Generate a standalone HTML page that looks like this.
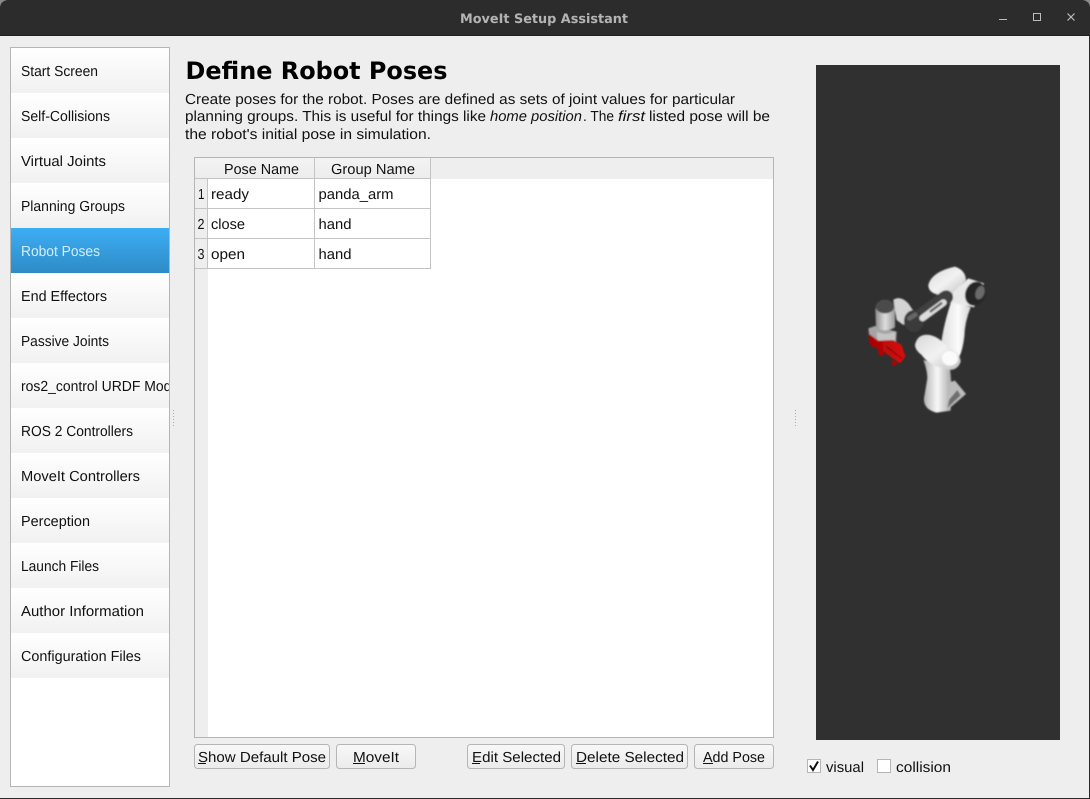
<!DOCTYPE html>
<html><head><meta charset="utf-8"><title>MoveIt Setup Assistant</title>
<style>
html,body{margin:0;padding:0;background:#eee;overflow:hidden}
svg{display:block}
text{font-family:"Liberation Sans",sans-serif;font-size:14.6px;fill:#111;text-rendering:geometricPrecision}
</style></head><body>
<svg width="1090" height="799" viewBox="0 0 1090 799" xmlns="http://www.w3.org/2000/svg">
<defs>
<linearGradient id="it" x1="0" y1="0" x2="0" y2="1"><stop offset="0" stop-color="#fff"/><stop offset="1" stop-color="#f1f1f1"/></linearGradient>
<linearGradient id="sel" x1="0" y1="0" x2="0" y2="1"><stop offset="0" stop-color="#3daef5"/><stop offset="1" stop-color="#2e8bc6"/></linearGradient>
<linearGradient id="btn" x1="0" y1="0" x2="0" y2="1"><stop offset="0" stop-color="#f8f8f8"/><stop offset="1" stop-color="#ebebeb"/></linearGradient>
<linearGradient id="hd" x1="0" y1="0" x2="0" y2="1"><stop offset="0" stop-color="#f3f3f3"/><stop offset="1" stop-color="#ececec"/></linearGradient>
<linearGradient id="w1" x1="0" y1="0" x2="1" y2="0"><stop offset="0" stop-color="#b0b0b0"/><stop offset=".5" stop-color="#f8f8f8"/><stop offset="1" stop-color="#a8a8a8"/></linearGradient>
<linearGradient id="w2" x1="0" y1="0" x2="1" y2="0"><stop offset="0" stop-color="#dcdcdc"/><stop offset=".6" stop-color="#fbfbfb"/><stop offset="1" stop-color="#d4d4d4"/></linearGradient>
<linearGradient id="w3" x1="0" y1="0" x2="1" y2="1"><stop offset="0" stop-color="#d8d8d8"/><stop offset=".5" stop-color="#f2f2f2"/><stop offset="1" stop-color="#c0c0c0"/></linearGradient>
<linearGradient id="w4" x1="0" y1="0" x2="1" y2="0"><stop offset="0" stop-color="#8c8c8c"/><stop offset=".5" stop-color="#dedede"/><stop offset="1" stop-color="#9a9a9a"/></linearGradient>
<linearGradient id="rd" x1="0" y1="0" x2="1" y2="0"><stop offset="0" stop-color="#a80000"/><stop offset="1" stop-color="#d81010"/></linearGradient>
<clipPath id="sb"><rect x="11" y="48" width="158" height="738"/></clipPath>
<filter id="bl" x="-10%" y="-10%" width="120%" height="120%"><feGaussianBlur stdDeviation="2.5"/></filter>
</defs>

<!-- window -->
<rect width="1090" height="799" fill="#eeeeee"/>
<rect x="0" y="0" width="1090" height="36" fill="#2c2c2c"/>
<rect x="0" y="35" width="1090" height="1" fill="#1f1f1f"/>
<path d="M0 0H7Q1 1 0 7Z" fill="#8a8a8a"/><path d="M1090 0H1083Q1089 1 1090 7Z" fill="#8a8a8a"/>
<rect x="0" y="798" width="1090" height="1" fill="#2a2a2a"/>
<rect x="1089" y="36" width="1" height="763" fill="#2a2a2a"/>
<text x="460" y="23" textLength="168" lengthAdjust="spacingAndGlyphs" style="font-family:'DejaVu Sans',sans-serif;font-weight:bold;font-size:13px;fill:#b4b4b4">MoveIt Setup Assistant</text>
<rect x="999" y="19" width="8" height="1" fill="#bdbdbd"/>
<rect x="1033.5" y="13.5" width="7" height="7" fill="none" stroke="#bdbdbd"/>
<path d="M1067.5 13.5L1074.5 20.5M1074.5 13.5L1067.5 20.5" stroke="#bdbdbd" stroke-width="1.2"/>

<!-- sidebar -->
<rect x="10.5" y="47.5" width="159" height="739" fill="#fff" stroke="#b5b5b5"/>
<g fill="url(#it)">
<rect x="11" y="48" width="158" height="45"/><rect x="11" y="93" width="158" height="45"/><rect x="11" y="138" width="158" height="45"/><rect x="11" y="183" width="158" height="45"/>
<rect x="11" y="273" width="158" height="45"/><rect x="11" y="318" width="158" height="45"/><rect x="11" y="363" width="158" height="45"/><rect x="11" y="408" width="158" height="45"/>
<rect x="11" y="453" width="158" height="45"/><rect x="11" y="498" width="158" height="45"/><rect x="11" y="543" width="158" height="45"/><rect x="11" y="588" width="158" height="45"/><rect x="11" y="633" width="158" height="45"/>
</g>
<rect x="11" y="228" width="158" height="45" fill="url(#sel)"/>
<g clip-path="url(#sb)">
<text x="21" y="76" textLength="77" lengthAdjust="spacingAndGlyphs">Start Screen</text>
<text x="21" y="121" textLength="89" lengthAdjust="spacingAndGlyphs">Self-Collisions</text>
<text x="21" y="166" textLength="85" lengthAdjust="spacingAndGlyphs">Virtual Joints</text>
<text x="21" y="211" textLength="104" lengthAdjust="spacingAndGlyphs">Planning Groups</text>
<text x="21" y="256" textLength="79" lengthAdjust="spacingAndGlyphs" style="fill:#d5edfc">Robot Poses</text>
<text x="21" y="301" textLength="86" lengthAdjust="spacingAndGlyphs">End Effectors</text>
<text x="21" y="346" textLength="88" lengthAdjust="spacingAndGlyphs">Passive Joints</text>
<text x="21" y="391" textLength="176" lengthAdjust="spacingAndGlyphs">ros2_control URDF Modules</text>
<text x="21" y="436" textLength="112" lengthAdjust="spacingAndGlyphs">ROS 2 Controllers</text>
<text x="21" y="481" textLength="119" lengthAdjust="spacingAndGlyphs">MoveIt Controllers</text>
<text x="21" y="526" textLength="69" lengthAdjust="spacingAndGlyphs">Perception</text>
<text x="21" y="571" textLength="78" lengthAdjust="spacingAndGlyphs">Launch Files</text>
<text x="21" y="616" textLength="123" lengthAdjust="spacingAndGlyphs">Author Information</text>
<text x="21" y="661" textLength="120" lengthAdjust="spacingAndGlyphs">Configuration Files</text>
</g>

<!-- splitter handles -->
<g fill="#a8a8a8">
<rect x="173" y="410" width="1" height="1"/><rect x="173" y="413" width="1" height="1"/><rect x="173" y="416" width="1" height="1"/><rect x="173" y="419" width="1" height="1"/><rect x="173" y="422" width="1" height="1"/><rect x="173" y="425" width="1" height="1"/>
<rect x="795" y="410" width="1" height="1"/><rect x="795" y="413" width="1" height="1"/><rect x="795" y="416" width="1" height="1"/><rect x="795" y="419" width="1" height="1"/><rect x="795" y="422" width="1" height="1"/><rect x="795" y="425" width="1" height="1"/>
</g>

<!-- heading -->
<text x="185.500" y="79" textLength="262" lengthAdjust="spacingAndGlyphs" style="font-family:'DejaVu Sans',sans-serif;font-weight:bold;font-size:24px;fill:#000">Define Robot Poses</text>
<text x="185" y="104" textLength="550" lengthAdjust="spacingAndGlyphs">Create poses for the robot. Poses are defined as sets of joint values for particular</text>
<text x="185" y="121" textLength="301" lengthAdjust="spacingAndGlyphs">planning groups. This is useful for things like</text>
<text x="490" y="121" textLength="92" lengthAdjust="spacingAndGlyphs" font-style="italic">home position</text>
<text x="583" y="121" textLength="31" lengthAdjust="spacingAndGlyphs">. The</text>
<text x="618" y="121" textLength="27" lengthAdjust="spacingAndGlyphs" font-style="italic">first</text>
<text x="649" y="121" textLength="121" lengthAdjust="spacingAndGlyphs">listed pose will be</text>
<text x="185" y="139" textLength="246" lengthAdjust="spacingAndGlyphs">the robot's initial pose in simulation.</text>

<!-- table -->
<rect x="194.500" y="157.500" width="579" height="580" fill="#fff" stroke="#b5b5b5"/>
<rect x="195" y="158" width="578" height="21" fill="#eeeeee"/>
<rect x="195" y="158" width="236" height="21" fill="url(#hd)"/>
<rect x="195" y="179" width="13" height="558" fill="#eeeeee"/>
<g fill="#c4c4c4">
<rect x="195" y="178" width="236" height="1"/>
<rect x="207" y="179" width="1" height="90"/>
<rect x="314" y="158" width="1" height="111"/>
<rect x="430" y="158" width="1" height="111"/>
<rect x="195" y="208" width="236" height="1"/>
<rect x="195" y="238" width="236" height="1"/>
<rect x="195" y="268" width="236" height="1"/>
</g>
<text x="224" y="174" textLength="75" lengthAdjust="spacingAndGlyphs">Pose Name</text>
<text x="331" y="174" textLength="84" lengthAdjust="spacingAndGlyphs">Group Name</text>
<text x="198" y="199" textLength="6.500" lengthAdjust="spacingAndGlyphs">1</text>
<text x="197.500" y="229" textLength="7" lengthAdjust="spacingAndGlyphs">2</text>
<text x="197.500" y="259" textLength="7" lengthAdjust="spacingAndGlyphs">3</text>
<text x="211" y="199" textLength="38" lengthAdjust="spacingAndGlyphs">ready</text>
<text x="318.500" y="199" textLength="75" lengthAdjust="spacingAndGlyphs">panda_arm</text>
<text x="211" y="229" textLength="34" lengthAdjust="spacingAndGlyphs">close</text>
<text x="318.500" y="229" textLength="33" lengthAdjust="spacingAndGlyphs">hand</text>
<text x="211" y="259" textLength="34" lengthAdjust="spacingAndGlyphs">open</text>
<text x="318.500" y="259" textLength="33" lengthAdjust="spacingAndGlyphs">hand</text>

<!-- buttons -->
<g fill="url(#btn)" stroke="#b5b5b5">
<rect x="194.500" y="744.500" width="135" height="24" rx="3"/>
<rect x="336.500" y="744.500" width="79" height="24" rx="3"/>
<rect x="467.500" y="744.500" width="97" height="24" rx="3"/>
<rect x="571.500" y="744.500" width="116" height="24" rx="3"/>
<rect x="694.500" y="744.500" width="79" height="24" rx="3"/>
</g>
<text x="198" y="762" textLength="128" lengthAdjust="spacingAndGlyphs">Show Default Pose</text>
<text x="353" y="762" textLength="46" lengthAdjust="spacingAndGlyphs">MoveIt</text>
<text x="472" y="762" textLength="89" lengthAdjust="spacingAndGlyphs">Edit Selected</text>
<text x="576" y="762" textLength="108" lengthAdjust="spacingAndGlyphs">Delete Selected</text>
<text x="703" y="762" textLength="62" lengthAdjust="spacingAndGlyphs">Add Pose</text>
<g fill="#111">
<rect x="198" y="763" width="8" height="1"/><rect x="353" y="763" width="12" height="1"/><rect x="472" y="763" width="8" height="1"/><rect x="576" y="763" width="10" height="1"/><rect x="703" y="763" width="10" height="1"/>
</g>

<!-- viewer -->
<rect x="816" y="65" width="244" height="675" fill="#303030"/>
<svg x="840" y="250" width="170" height="180" viewBox="0 0 510 540">
<g filter="url(#bl)" fill="none" stroke-linecap="round" stroke-linejoin="round">
<!-- base -->
<path d="M250 330Q262 360 262 385L252 445Q250 478 290 488L332 482L334 400L330 350Z" fill="url(#w1)"/>
<path d="M320 482L378 432L345 392L330 396L326 440Z" fill="#bcbcbc"/>
<path d="M322 474L362 436L352 420L328 448Z" fill="#6e6e6e"/>
<!-- upper arm -->
<path d="M305 270Q312 220 335 150L392 172Q374 215 373 260Q368 300 358 320L340 358L300 345Z" fill="url(#w2)"/>
<!-- shoulder -->
<path d="M225 285Q232 250 270 255Q300 262 322 292Q360 305 362 335Q352 365 320 358Q265 345 245 315Q225 300 225 285Z" fill="url(#w3)"/>
<ellipse cx="330" cy="325" rx="24" ry="22" fill="#fbfbfb"/>
<!-- elbow top -->
<path d="M265 105Q275 65 345 50Q376 60 378 90L340 130L300 135Q265 130 265 105Z" fill="url(#w3)"/>
<path d="M338 128L385 85L432 100L402 172L335 158Z" fill="#e8e8e8"/>
<!-- elbow ring -->
<ellipse cx="406" cy="131" rx="30" ry="37" transform="rotate(20 406 131)" fill="#272727"/>
<ellipse cx="420" cy="128" rx="13" ry="21" transform="rotate(20 420 128)" fill="#6a6a6a"/>
<!-- wrist and forearm -->
<path d="M160 150Q180 135 205 160L225 190L190 225L170 210Z" fill="#d4d4d4"/>
<path d="M222 212L318 142" stroke="#3f3f3f" stroke-width="42"/>
<ellipse cx="222" cy="213" rx="30" ry="33" fill="#3a3a3a"/>
<path d="M208 205L226 194" stroke="#666" stroke-width="14"/>
<path d="M248 204L310 158" stroke="#dcdcdc" stroke-width="20"/>
<path d="M272 184L304 160" stroke="#565656" stroke-width="7"/>
<!-- hand -->
<path d="M85 235L105 228L170 245L168 278L130 282L88 258Z" fill="#a4a4a4"/>
<path d="M106 180Q110 150 135 150Q160 150 165 180L165 232Q135 250 108 232Z" fill="url(#w4)"/>
<ellipse cx="135" cy="170" rx="28" ry="20" fill="#4c4c4c"/>
<path d="M110 245Q135 258 165 245L165 272L130 280L112 268Z" fill="#c4c4c4"/>
<path d="M85 250L115 272L160 270L185 285L196 320L180 340L130 305L90 285Z" fill="url(#rd)"/>
<path d="M112 298L132 306L130 318L118 316Z" fill="#b80000"/>
<path d="M155 330L172 338L166 348L156 344Z" fill="#b80000"/>
<path d="M140 290L185 325" stroke="#7c0000" stroke-width="3"/>
</g>
</svg>

<!-- checkboxes -->
<rect x="807.500" y="759.500" width="13" height="13" fill="#fff" stroke="#b5b5b5"/>
<path d="M810 765.500L813 770L818 761.500" fill="none" stroke="#111" stroke-width="2"/>
<text x="826" y="772" textLength="38" lengthAdjust="spacingAndGlyphs">visual</text>
<rect x="877.500" y="759.500" width="13" height="13" fill="#fff" stroke="#b5b5b5"/>
<text x="896" y="772" textLength="55" lengthAdjust="spacingAndGlyphs">collision</text>
</svg>
</body></html>
